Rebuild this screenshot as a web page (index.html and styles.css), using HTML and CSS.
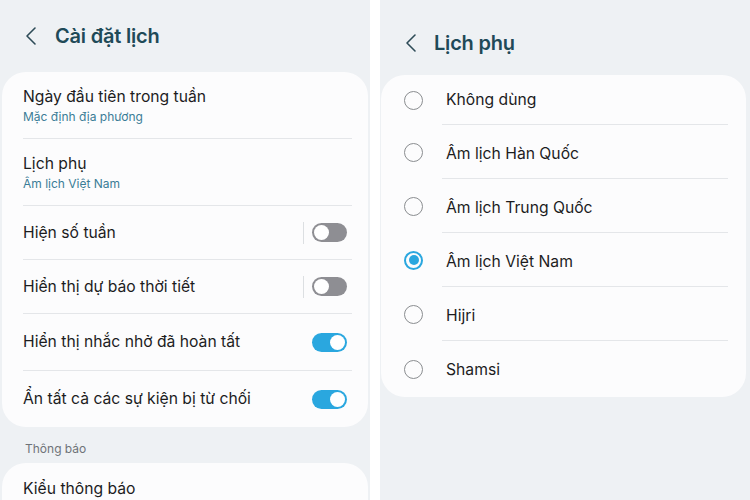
FILE: index.html
```html
<!DOCTYPE html>
<html lang="vi">
<head>
<meta charset="utf-8">
<link rel="stylesheet" href="styles.css">
</head>
<body>
<div class="screens">
  <section class="panel panel-left">
    <header class="head">
      <svg class="back" width="12" height="20" viewBox="0 0 12 20"><path d="M10 2 L2 10 L10 18" fill="none" stroke="#2d4b57" stroke-width="1.6" stroke-linecap="round" stroke-linejoin="round"/></svg>
      <h1 class="title">Cài đặt lịch</h1>
    </header>
    <div class="card">
      <div class="row row-two">
        <div class="row-label">Ngày đầu tiên trong tuần</div>
        <div class="row-sub">Mặc định địa phương</div>
      </div>
      <div class="row row-two">
        <div class="row-label">Lịch phụ</div>
        <div class="row-sub">Âm lịch Việt Nam</div>
      </div>
      <div class="row row-switch">
        <div class="row-label">Hiện số tuần</div>
        <span class="vsep"></span>
        <span class="switch"></span>
      </div>
      <div class="row row-switch">
        <div class="row-label">Hiển thị dự báo thời tiết</div>
        <span class="vsep"></span>
        <span class="switch"></span>
      </div>
      <div class="row row-switch row-tall">
        <div class="row-label">Hiển thị nhắc nhở đã hoàn tất</div>
        <span class="switch on"></span>
      </div>
      <div class="row row-switch row-tall last">
        <div class="row-label">Ẩn tất cả các sự kiện bị từ chối</div>
        <span class="switch on"></span>
      </div>
    </div>
    <div class="section-title">Thông báo</div>
    <div class="card card-cut">
      <div class="row row-single">
        <div class="row-label">Kiểu thông báo</div>
      </div>
    </div>
  </section>
  <section class="panel panel-right">
    <header class="head head-right">
      <svg class="back" width="12" height="20" viewBox="0 0 12 20"><path d="M10 2 L2 10 L10 18" fill="none" stroke="#2d4b57" stroke-width="1.6" stroke-linecap="round" stroke-linejoin="round"/></svg>
      <h1 class="title">Lịch phụ</h1>
    </header>
    <div class="card card-radio">
      <div class="opt first"><span class="radio"></span><span class="opt-label">Không dùng</span></div>
      <div class="opt"><span class="radio"></span><span class="opt-label">Âm lịch Hàn Quốc</span></div>
      <div class="opt"><span class="radio"></span><span class="opt-label">Âm lịch Trung Quốc</span></div>
      <div class="opt"><span class="radio checked"></span><span class="opt-label">Âm lịch Việt Nam</span></div>
      <div class="opt"><span class="radio"></span><span class="opt-label">Hijri</span></div>
      <div class="opt last"><span class="radio"></span><span class="opt-label">Shamsi</span></div>
    </div>
  </section>
</div>
</body>
</html>
```

FILE: styles.css
```css
* { box-sizing: border-box; }
html, body {
  margin: 0;
  padding: 0;
  background: #ffffff;
  font-family: Inter, Roboto, "Noto Sans", sans-serif;
  color: #1c1c1e;
}
.screens {
  display: flex;
  gap: 10px;
  width: 750px;
  height: 500px;
  overflow: hidden;
}
.panel {
  background: #eef1f4;
  height: 500px;
  overflow: hidden;
}
.panel-left {
  width: 370px;
  padding: 0 2px 0 2px;
}
.panel-right {
  width: 370px;
  padding: 0 4px 0 1px;
}
.head {
  display: flex;
  gap: 18px;
  align-items: flex-start;
}
.panel-left .head { height: 72px; padding: 26px 0 0 23px; }
.head-right { height: 75px; padding: 33px 0 0 24px; gap: 17px; }
.back { display: block; flex: none; }
.title {
  margin: 0;
  font-size: 20px;
  font-weight: 600;
  color: #1f4a58;
  line-height: 20px;
  letter-spacing: -0.2px;
}
.card {
  background: #fcfcfd;
  border-radius: 24px;
  padding: 0 16px 0 21px;
}
.row {
  border-bottom: 1px solid #e4e6e9;
  display: flex;
}
.row.last { border-bottom: none; }
.row-two {
  height: 67px;
  flex-direction: column;
  padding-top: 15px;
}
.row-label {
  font-size: 15.7px;
  line-height: 20px;
  color: #1c1c1e;
}
.row-sub {
  font-size: 12px;
  line-height: 16px;
  margin-top: 2px;
  color: #3b7d97;
}
.row-switch {
  height: 54px;
  align-items: center;
}
.row-tall { height: 57px; }
.row-switch.last { height: 56px; }
.row-switch .row-label { flex: 1; }
.vsep {
  width: 1px;
  height: 22px;
  background: #dcdfe2;
  margin-right: 8px;
}
.switch {
  position: relative;
  width: 35px;
  height: 19px;
  border-radius: 10px;
  background: #8e8e93;
  margin-right: 5px;
  flex: none;
}
.switch::after {
  content: "";
  position: absolute;
  top: 2px;
  left: 2px;
  width: 15px;
  height: 15px;
  border-radius: 50%;
  background: #ffffff;
}
.switch.on { background: #2aa7df; }
.switch.on::after { left: 18px; }
.section-title {
  font-size: 12px;
  line-height: 16px;
  color: #6e7378;
  padding: 14px 0 0 23px;
  height: 36px;
}
.card-cut { border-radius: 24px 24px 0 0; }
.row-single {
  height: 52px;
  align-items: flex-start;
  padding-top: 16px;
}
.card-radio {
  padding: 0 18px 0 23px;
}
.opt {
  display: flex;
  align-items: center;
  height: 54px;
}
.opt.first { height: 50px; }
.opt.last { height: 56px; }
.opt-label {
  flex: 1;
  height: 100%;
  display: flex;
  align-items: center;
  margin-left: 19px;
  padding: 3px 0 0 4px;
  font-size: 15.7px;
  color: #1c1c1e;
  border-bottom: 1px solid #e4e6e9;
}
.opt.first .opt-label { padding-top: 0; }
.opt.last .opt-label { border-bottom: none; padding-top: 0; }
.radio {
  width: 19px;
  height: 19px;
  border-radius: 50%;
  border: 1.5px solid #8a8d90;
  flex: none;
  position: relative;
}
.radio.checked {
  border: 2px solid #2aa7df;
}
.radio.checked::after {
  content: "";
  position: absolute;
  top: 2.5px;
  left: 2.5px;
  width: 10px;
  height: 10px;
  border-radius: 50%;
  background: #2aa7df;
}
```
